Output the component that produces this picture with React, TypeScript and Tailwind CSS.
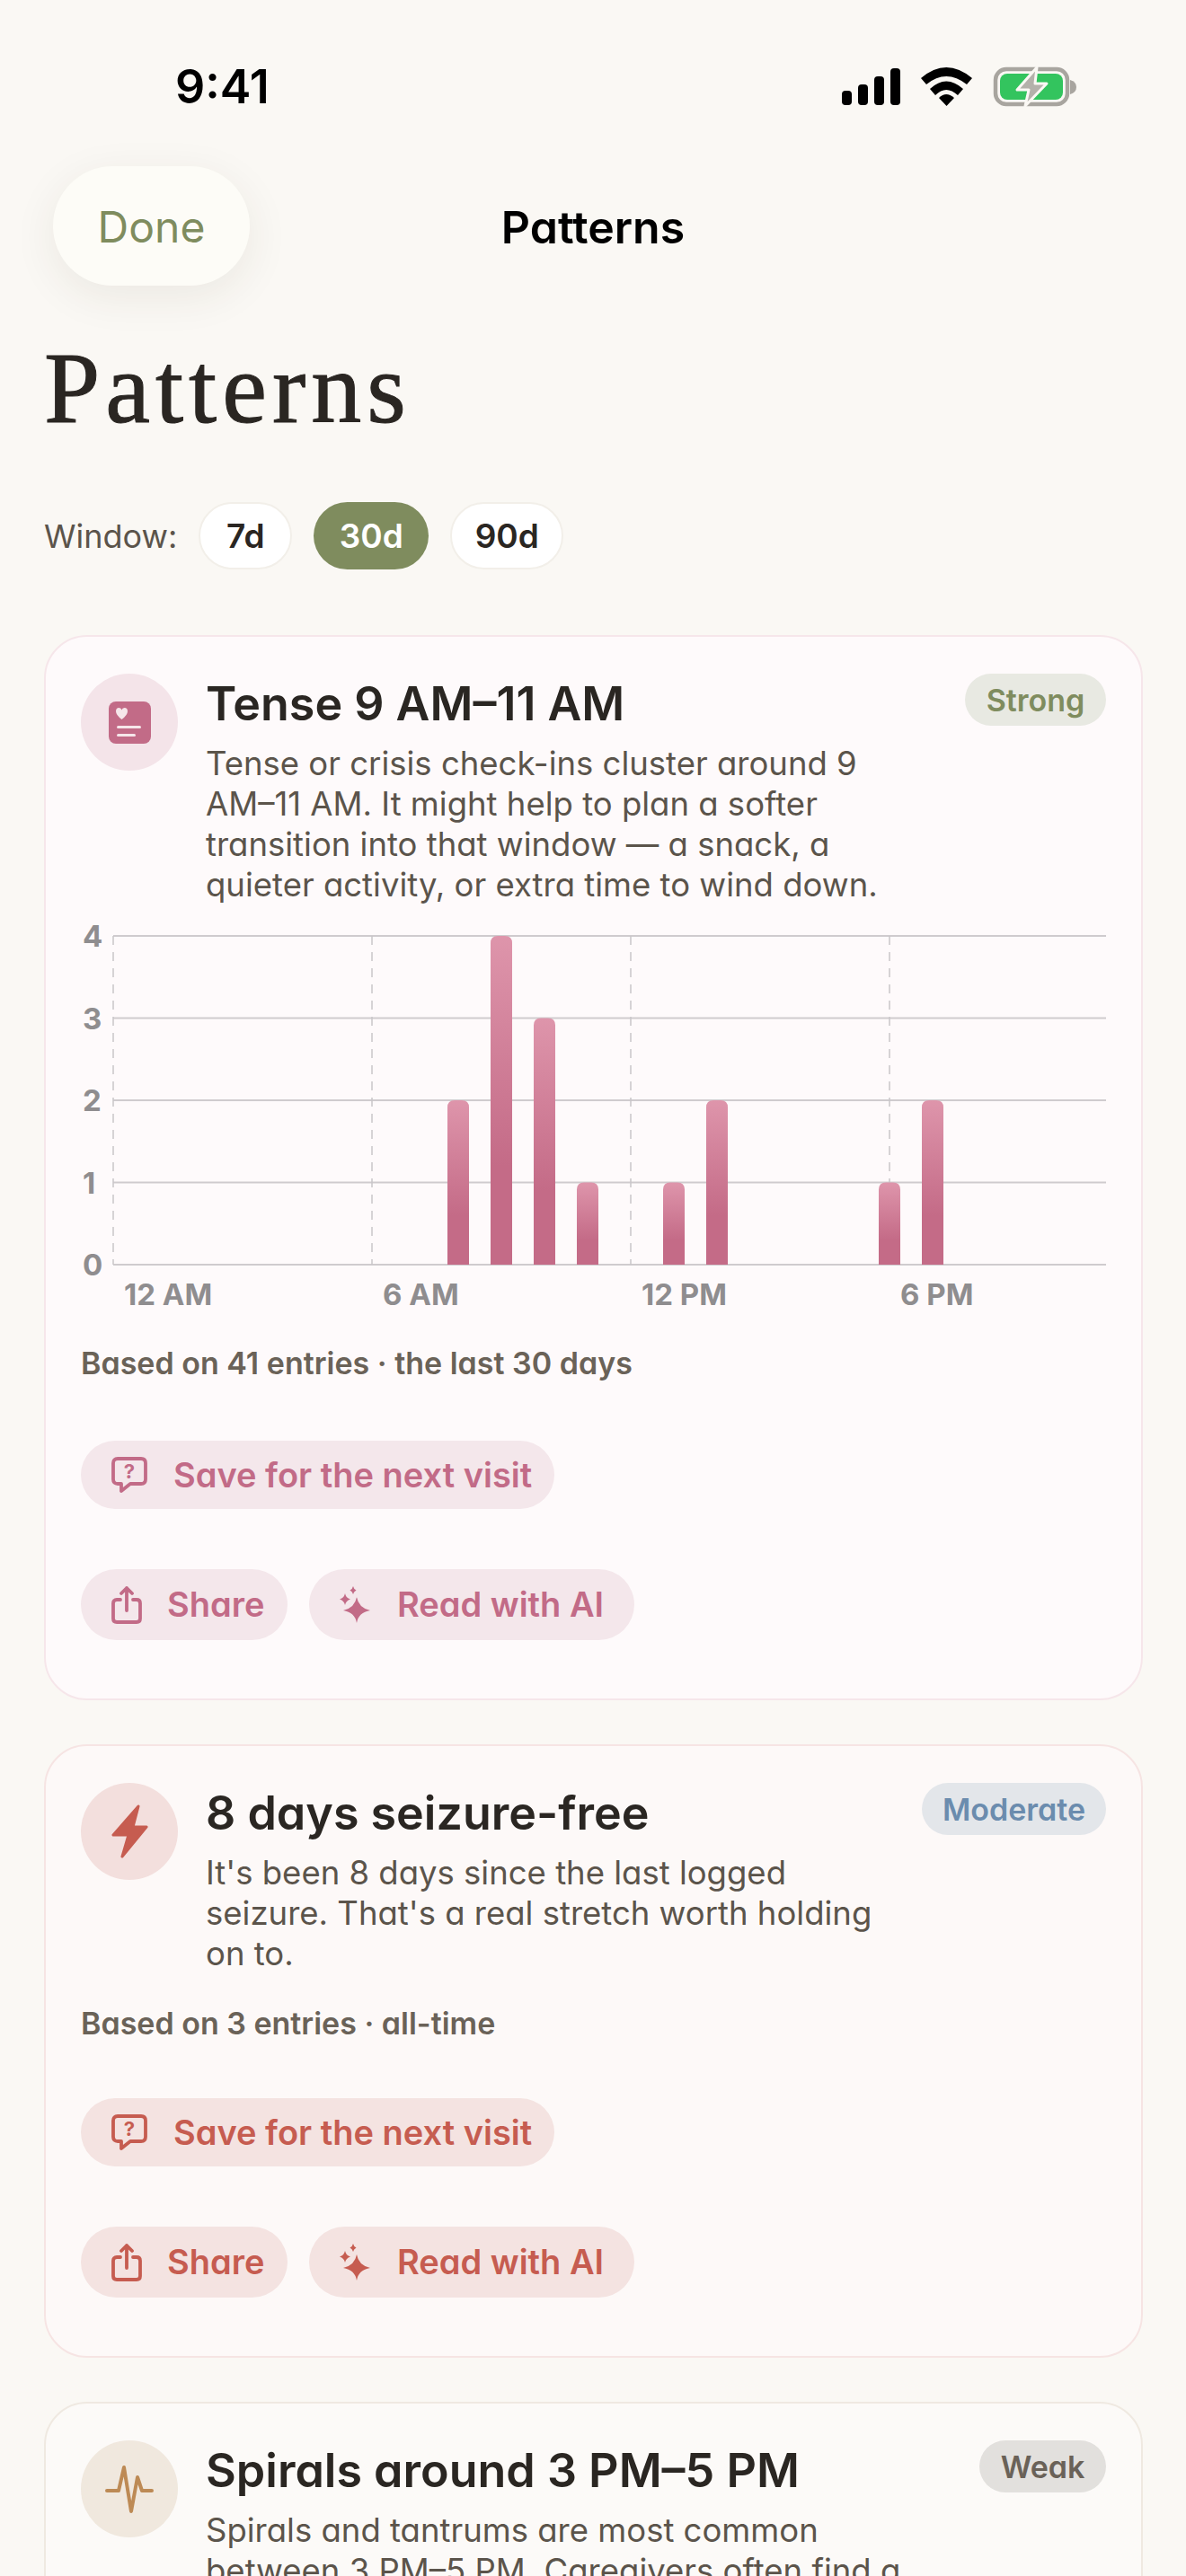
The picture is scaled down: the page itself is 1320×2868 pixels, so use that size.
import { ReactNode } from "react";

const sans = "font-['Inter','Liberation_Sans',sans-serif] [font-feature-settings:'cv11']";

type Tone = {
  border: string;
  card: string;
  circle: string;
  pill: string;
  text: string;
};

const rose: Tone = {
  border: "border-[#f6e6ea]",
  card: "bg-[#fefafb]",
  circle: "bg-[#f4e4e9]",
  pill: "bg-[#f4e7eb]",
  text: "text-[#c26b87]",
};

const coral: Tone = {
  border: "border-[#f6e4e3]",
  card: "bg-[#fdf9f8]",
  circle: "bg-[#f3dfdd]",
  pill: "bg-[#f4e3e1]",
  text: "text-[#c65c50]",
};

const sand: Tone = {
  border: "border-[#efe9e1]",
  card: "bg-[#fcfaf8]",
  circle: "bg-[#f0e8de]",
  pill: "bg-[#f2eae0]",
  text: "text-[#bd8a55]",
};

function StatusBar() {
  return (
    <div className="flex h-[130px] items-center justify-between pt-[64px] pl-[195px] pr-[121px]">
      <span className="text-[52px] leading-[62px] font-semibold text-black">9:41</span>
      <svg width="262" height="48" viewBox="0 0 262 48">
        {/* signal */}
        <rect x="0" y="28" width="11" height="16" rx="4" />
        <rect x="18" y="21" width="11" height="23" rx="4" />
        <rect x="36" y="12" width="11" height="32" rx="4" />
        <rect x="54" y="3" width="11" height="41" rx="4" />
        {/* wifi */}
        <path d="M88 14 Q116 -10 145 14 L139 21 Q116 3 94 21 Z" />
        <path d="M98 26 Q116 9 135 26 L129 33 Q116 21 104 33 Z" />
        <path d="M108 36 Q116 28 125 36 L116.5 45 Z" />
        {/* battery */}
        <rect x="171" y="4" width="80" height="39" rx="12" fill="none" stroke="#a8a59f" strokeWidth="4.5" />
        <rect x="176" y="9" width="70" height="29" rx="8" fill="#33c45e" />
        <path d="M254 16 Q261 18 261 24 Q261 30 254 32 Z" fill="#a8a59f" />
        <path d="M217 2 L195 27 L208 27 L204 45 L228 20 L215 20 Z" fill="#b4b1ab" stroke="#faf8f4" strokeWidth="3" strokeLinejoin="round" />
      </svg>
    </div>
  );
}

function NavBar() {
  return (
    <div className="relative mt-[55px] flex h-[133px] items-center pl-[59px]">
      <button className="flex h-[133px] w-[219px] items-center justify-center rounded-full bg-[#fdfcf7] pt-[3px] text-[48px] text-[#7f8c5e] shadow-[0_12px_48px_rgba(60,50,30,0.08)]">
        Done
      </button>
      <span className="absolute left-0 right-0 mt-[3px] text-center text-[50px] font-semibold text-black">Patterns</span>
    </div>
  );
}

function Range() {
  return (
    <div className="mt-[67px] flex items-center pl-[49px]">
      <span className="mr-[24px] text-[36px] text-[#5b544b]">Window:</span>
      <span className="flex h-[75px] w-[104px] items-center justify-center rounded-full border-2 border-[#f2efe9] bg-white text-[37px] font-semibold text-[#2a2622]">7d</span>
      <span className="ml-[24px] flex h-[75px] w-[128px] items-center justify-center rounded-full bg-[#7f8c5e] text-[37px] font-semibold text-white">30d</span>
      <span className="ml-[24px] flex h-[75px] w-[126px] items-center justify-center rounded-full border-2 border-[#f2efe9] bg-white text-[37px] font-semibold text-[#2a2622]">90d</span>
    </div>
  );
}

function Pill({ tone, width, height, iconGap, icon, label }: { tone: Tone; width: number; height: number; iconGap: string; icon: ReactNode; label: string }) {
  return (
    <span
      className={`flex items-center rounded-full pl-[34px] text-[38px] font-semibold ${tone.pill} ${tone.text} ${iconGap}`}
      style={{ width, height }}
    >
      {icon}
      {label}
    </span>
  );
}

const QuestionIcon = () => (
  <svg width="40" height="40" viewBox="0 0 40 40" fill="none" stroke="currentColor" strokeWidth="3.8" strokeLinejoin="round">
    <path d="M7 2 H33 Q38 2 38 7 V25 Q38 30 33 30 H21 L11 38 V30 H7 Q2 30 2 25 V7 Q2 2 7 2 Z" />
    <text x="20" y="24" textAnchor="middle" fontSize="22" fontWeight="700" fill="currentColor" stroke="none">?</text>
  </svg>
);

const ShareIcon = () => (
  <svg width="34" height="42" viewBox="0 0 34 42" fill="none" stroke="currentColor" strokeWidth="3.8" strokeLinecap="round" strokeLinejoin="round">
    <path d="M10 15 H6 Q2 15 2 19 V36 Q2 40 6 40 H28 Q32 40 32 36 V19 Q32 15 28 15 H24" />
    <path d="M17 27 V2 M11 8 L17 2 L23 8" />
  </svg>
);

const SparkleIcon = () => (
  <svg width="34" height="41" viewBox="0 0 34 41" fill="currentColor">
    <path d="M19 12 Q21 24 34 27 Q21 29 19 41 Q17 29 4 27 Q17 24 19 12 Z" />
    <path d="M6 8 Q7 13 12 14.5 Q7 16 6 21 Q5 16 0 14.5 Q5 13 6 8 Z" />
    <path d="M15 0 Q15.6 3 18.5 4.5 Q15.6 6 15 9 Q14.4 6 11.5 4.5 Q14.4 3 15 0 Z" />
  </svg>
);

function Actions({ tone, className }: { tone: Tone; className: string }) {
  return (
    <>
      <div className={className}>
        <Pill tone={tone} width={527} height={76} iconGap="gap-[29px]" icon={<QuestionIcon />} label="Save for the next visit" />
      </div>
      <div className="mt-[67px] flex gap-[24px]">
        <Pill tone={tone} width={230} height={79} iconGap="gap-[28px]" icon={<ShareIcon />} label="Share" />
        <Pill tone={tone} width={362} height={79} iconGap="gap-[30px]" icon={<SparkleIcon />} label="Read with AI" />
      </div>
    </>
  );
}

function Card({ tone, icon, title, badge, lines, children }: { tone: Tone; icon: ReactNode; title: string; badge: ReactNode; lines: string[]; children?: ReactNode }) {
  return (
    <section className={`rounded-[48px] border-2 px-[39px] pt-[41px] pb-[65px] ${tone.border} ${tone.card}`}>
      <div className="relative flex gap-[31px]">
        <div className={`flex size-[108px] shrink-0 items-center justify-center rounded-full ${tone.circle}`}>{icon}</div>
        <div className="min-w-0 pt-[3px]">
          <h2 className="text-[52px] leading-[62px] font-semibold text-[#2a2622]">{title}</h2>
          <p className="mt-[13px] text-[36.5px] leading-[45px] text-[#5b544b]">
            {lines.map((line) => (
              <span key={line} className="block whitespace-nowrap">{line}</span>
            ))}
          </p>
        </div>
        <div className="absolute right-0 top-0">{badge}</div>
      </div>
      {children}
    </section>
  );
}

const bars = [
  { hour: 8, count: 2 },
  { hour: 9, count: 4 },
  { hour: 10, count: 3 },
  { hour: 11, count: 1 },
  { hour: 13, count: 1 },
  { hour: 14, count: 2 },
  { hour: 18, count: 1 },
  { hour: 19, count: 2 },
];

function HourChart() {
  const left = 36;
  const hourWidth = 48;
  const base = 396;
  const unit = 91.5;
  return (
    <svg width="1142" height="450" viewBox="0 0 1142 450" className="mt-[4px] block">
      <defs>
        <linearGradient id="bar" x1="0" y1="0" x2="0" y2="1">
          <stop offset="0" stopColor="#de95ab" />
          <stop offset="0.7" stopColor="#c46b87" />
          <stop offset="1" stopColor="#c46b87" />
        </linearGradient>
      </defs>
      {[0, 1, 2, 3, 4].map((n) => (
        <g key={n}>
          <line x1={left} x2="1141" y1={base - n * unit} y2={base - n * unit} stroke="#cfcbce" strokeWidth="2" />
          <text x="2" y={base - n * unit + 12} fontSize="33" fontWeight="700" fill="#8f8d8f" fontFamily="Inter">{n}</text>
        </g>
      ))}
      {[0, 6, 12, 18].map((h) => (
        <line key={h} x1={left + h * hourWidth} x2={left + h * hourWidth} y1={base - 4 * unit} y2={base} stroke="#c9c6c9" strokeWidth="1.5" strokeDasharray="10 8" />
      ))}
      {bars.map((b) => {
        const x = left + b.hour * hourWidth;
        const top = base - b.count * unit;
        return (
          <path
            key={b.hour}
            d={`M${x - 12} ${base} V${top + 8} Q${x - 12} ${top} ${x - 4} ${top} H${x + 4} Q${x + 12} ${top} ${x + 12} ${top + 8} V${base} Z`}
            fill="url(#bar)"
          />
        );
      })}
      {[
        { label: "12 AM", hour: 0 },
        { label: "6 AM", hour: 6 },
        { label: "12 PM", hour: 12 },
        { label: "6 PM", hour: 18 },
      ].map((tick) => (
        <text key={tick.label} x={left + 12 + tick.hour * hourWidth} y="441" fontSize="33" fontWeight="700" fill="#8f8d8f" fontFamily="Inter">{tick.label}</text>
      ))}
    </svg>
  );
}

function Badge({ label, className }: { label: string; className: string }) {
  return <span className={`flex h-[58px] items-center justify-center rounded-full text-[34px] font-semibold ${className}`}>{label}</span>;
}

export default function App() {
  return (
    <div className={`h-[2868px] w-[1320px] overflow-hidden bg-[#faf8f4] ${sans}`}>
      <StatusBar />
      <NavBar />
      <h1 className="mt-[54px] pl-[49px] font-['Liberation_Serif',serif] text-[112px] leading-[120px] tracking-[6px] text-[#2a2622] [-webkit-text-stroke:1px_#2a2622]">Patterns</h1>
      <Range />

      <div className="ml-[49px] mr-[48px] mt-[73px] flex flex-col gap-[49px]">
        <Card
          tone={rose}
          title="Tense 9 AM–11 AM"
          badge={<Badge label="Strong" className="w-[157px] bg-[#e8e9e2] text-[#7f8c5e]" />}
          lines={[
            "Tense or crisis check-ins cluster around 9",
            "AM–11 AM. It might help to plan a softer",
            "transition into that window — a snack, a",
            "quieter activity, or extra time to wind down.",
          ]}
          icon={
            <svg width="47" height="47" viewBox="0 0 47 47">
              <rect width="47" height="47" rx="8" fill="#c26b87" />
              <path d="M14.5 20 Q8 15 8 11 Q8 7 11.5 7 Q14 7 14.5 9.5 Q15 7 17.5 7 Q21 7 21 11 Q21 15 14.5 20 Z" fill="#f6e6ea" />
              <rect x="9" y="27" width="27" height="3" rx="1.5" fill="#f6e6ea" />
              <rect x="9" y="36" width="21" height="3" rx="1.5" fill="#f6e6ea" />
            </svg>
          }
        >
          <HourChart />
          <p className="mt-[34px] text-[34px] leading-[44px] font-semibold text-[#6a6258]">Based on 41 entries · the last 30 days</p>
          <Actions tone={rose} className="mt-[64px]" />
        </Card>

        <Card
          tone={coral}
          title="8 days seizure-free"
          badge={<Badge label="Moderate" className="w-[205px] bg-[#e3e6ea] text-[#6b8cae]" />}
          lines={[
            "It's been 8 days since the last logged",
            "seizure. That's a real stretch worth holding",
            "on to.",
          ]}
          icon={
            <svg width="41" height="60" viewBox="-2 -2 41 60" fill="#c65c50" stroke="#c65c50" strokeWidth="3" strokeLinejoin="round">
              <path d="M28 0 L0 32 L17 32 L10 56 L37 23 L22 23 Z" />
            </svg>
          }
        >
          <p className="mt-[33px] text-[34px] leading-[44px] font-semibold text-[#6a6258]">Based on 3 entries · all-time</p>
          <Actions tone={coral} className="mt-[61px]" />
        </Card>

        <Card
          tone={sand}
          title="Spirals around 3 PM–5 PM"
          badge={<Badge label="Weak" className="w-[141px] bg-[#e2e0dd] text-[#6a6258]" />}
          lines={[
            "Spirals and tantrums are most common",
            "between 3 PM–5 PM. Caregivers often find a",
          ]}
          icon={
            <svg width="54" height="56" viewBox="-2 -2 54 56" fill="none" stroke="#bd8a55" strokeWidth="4" strokeLinecap="round" strokeLinejoin="round">
              <path d="M0 28 H13 L19 2 L27 51 L34 13 L39 28 H50" />
            </svg>
          }
        />
      </div>
    </div>
  );
}
